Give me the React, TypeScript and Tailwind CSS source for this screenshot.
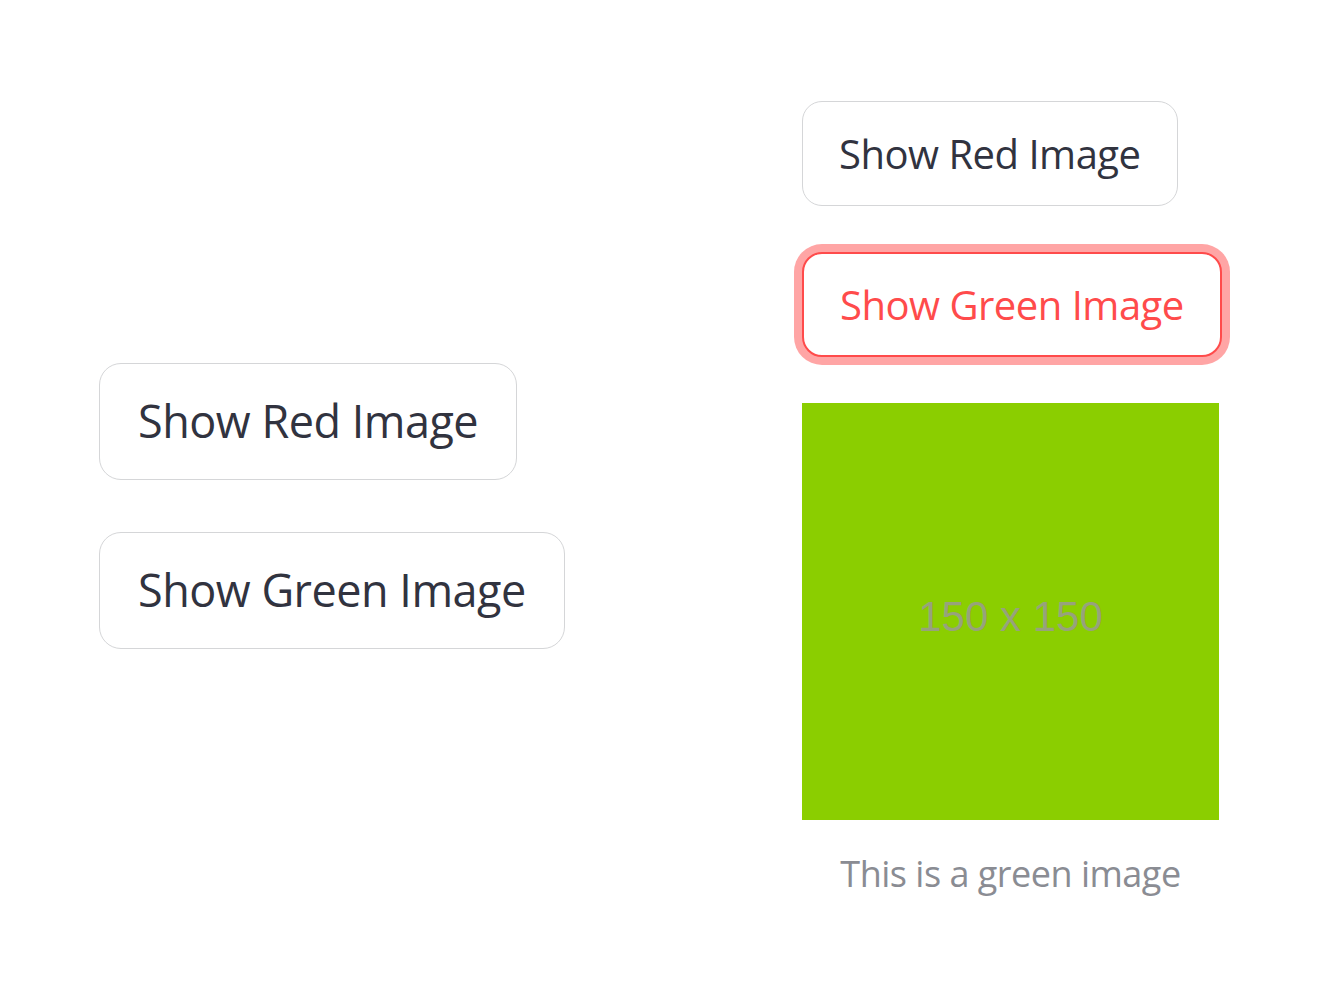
import React from "react";

const font = { fontFamily: '"Open Sans", "Noto Sans", sans-serif' };

function Btn({
  label,
  big,
  active,
}: {
  label: string;
  big?: boolean;
  active?: boolean;
}) {
  const size = big
    ? "h-[117px] px-[38px] text-[45px] rounded-[22px]"
    : "h-[105px] px-[36px] text-[40px] rounded-[20px]";
  const tone = active
    ? "border-[2.5px] border-[#ff4b4b] text-[#ff4b4b] shadow-[0_0_0_8px_rgba(255,75,75,0.5)]"
    : "border-[1.5px] border-[#d5d6d8] text-[#31333f]";
  return (
    <button
      className={`flex items-center bg-white whitespace-nowrap tracking-[-0.5px] ${size} ${tone}`}
    >
      {label}
    </button>
  );
}

export default function App() {
  return (
    <div className="min-h-[1008px] bg-white" style={font}>
      <div className="flex items-center pt-[101px] pl-[99px]">
        {/* left column */}
        <div className="flex w-[703px] flex-col items-start gap-[52px]">
          <Btn label="Show Red Image" big />
          <Btn label="Show Green Image" big />
        </div>

        {/* right column */}
        <div className="flex flex-col items-start pb-[8px]">
          <Btn label="Show Red Image" />
          <div className="mt-[46px]">
            <Btn label="Show Green Image" active />
          </div>
          <div className="mt-[46px] flex h-[417px] w-[417px] items-center justify-center bg-[#8bce00] pt-[10px]">
            <span
              className="text-[42px] text-[#97a27c]"
              style={{ fontFamily: '"Liberation Sans", Arial, sans-serif' }}
            >
              150 x 150
            </span>
          </div>
          <p className="mt-[26px] w-[417px] text-center text-[36px] leading-[56px] text-[#8a8c93] tracking-[-0.5px]">
            This is a green image
          </p>
        </div>
      </div>
    </div>
  );
}
